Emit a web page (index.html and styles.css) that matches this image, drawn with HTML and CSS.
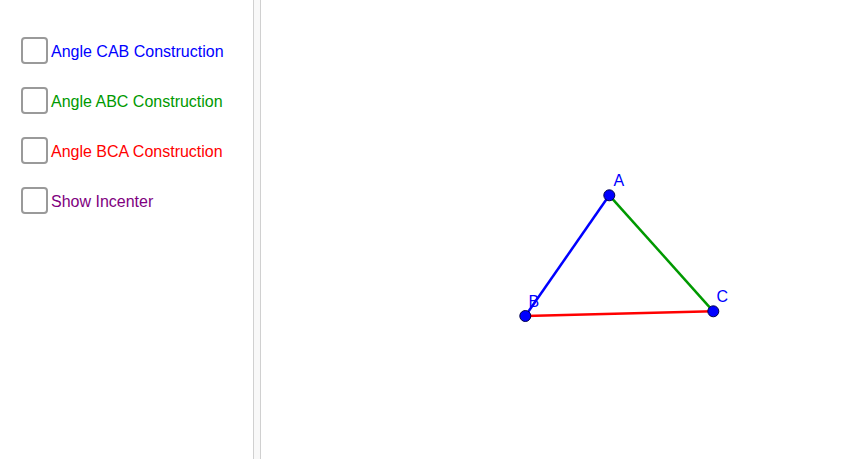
FILE: index.html
```html
<!DOCTYPE html>
<html>
<head>
<meta charset="utf-8">
<link rel="stylesheet" href="styles.css">
</head>
<body>
<div class="app">
  <div class="panel">
    <label class="row"><span class="box"></span><span class="txt blue">Angle CAB Construction</span></label>
    <label class="row"><span class="box"></span><span class="txt green">Angle ABC Construction</span></label>
    <label class="row"><span class="box"></span><span class="txt red">Angle BCA Construction</span></label>
    <label class="row"><span class="box"></span><span class="txt purple">Show Incenter</span></label>
  </div>
  <div class="divider"></div>
  <div class="canvas">
    <svg class="graph" width="605" height="461" viewBox="261 0 605 461">
      <line x1="609.3" y1="195.3" x2="525.3" y2="316" stroke="#0000ff" stroke-width="2.5"/>
      <line x1="609.3" y1="195.3" x2="713.3" y2="311.3" stroke="#009900" stroke-width="2.5"/>
      <line x1="525.3" y1="316" x2="713.3" y2="311.3" stroke="#ff0000" stroke-width="2.5"/>
      <circle cx="609.3" cy="195.3" r="5.5" fill="#0000ff" stroke="#00004d" stroke-width="1"/>
      <circle cx="525.3" cy="316" r="5.5" fill="#0000ff" stroke="#00004d" stroke-width="1"/>
      <circle cx="713.3" cy="311.3" r="5.5" fill="#0000ff" stroke="#00004d" stroke-width="1"/>
      <text x="613.5" y="186" class="lbl">A</text>
      <text x="528.5" y="307" class="lbl">B</text>
      <text x="716.5" y="302" class="lbl">C</text>
    </svg>
  </div>
</div>
</body>
</html>
```

FILE: styles.css
```css
html, body {
  margin: 0;
  padding: 0;
  background: #ffffff;
}
.app {
  display: flex;
  width: 866px;
  height: 461px;
  font-family: "Liberation Sans", Arial, sans-serif;
}
.panel {
  width: 232px;
  padding: 37px 0 0 21px;
  display: flex;
  flex-direction: column;
  gap: 23px;
}
.row {
  display: flex;
  align-items: center;
  height: 27px;
}
.box {
  width: 27px;
  height: 27px;
  box-sizing: border-box;
  border: 2px solid #9a9a9a;
  border-radius: 4px;
  background: #fff;
  flex: none;
}
.txt {
  margin-left: 3px;
  margin-top: 2px;
  font-size: 16px;
  line-height: 18px;
  white-space: nowrap;
}
.blue { color: #0000ff; }
.green { color: #009900; }
.red { color: #ff0000; }
.purple { color: #800080; }
.divider {
  width: 6px;
  height: 459px;
  background: #f8f8f8;
  border-left: 1px solid #d0d0d0;
  border-right: 1px solid #d0d0d0;
  flex: none;
}
.canvas {
  flex: 1;
  height: 461px;
}
.graph {
  display: block;
}
.lbl {
  font-family: "Liberation Sans", Arial, sans-serif;
  font-size: 16px;
  fill: #0000ff;
}
```
